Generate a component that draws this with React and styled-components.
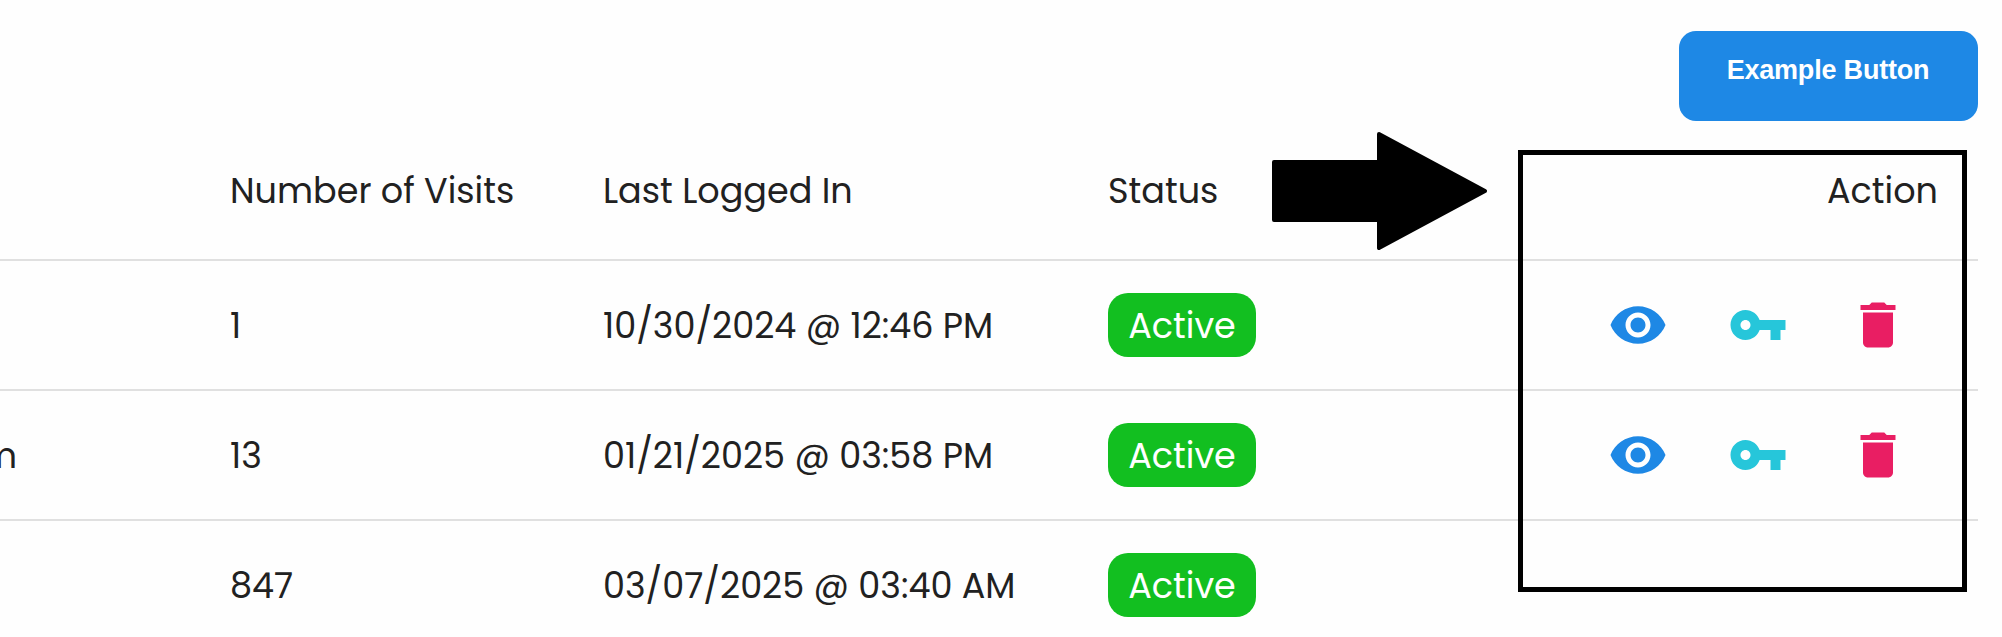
import React from 'react';
import styled, { createGlobalStyle } from 'styled-components';

const GlobalStyle = createGlobalStyle`
  body {
    margin: 0;
    background: #fefefe;
    overflow: hidden;
  }
`;

const Page = styled.main`
  position: relative;
  box-sizing: border-box;
  width: 2002px;
  height: 637px;
  padding-right: 24px;
  overflow: hidden;
  color: #212121;
  font-family: Poppins, Inter, sans-serif;
  font-size: 35px;
`;

const Toolbar = styled.header`
  display: flex;
  justify-content: flex-end;
  padding-top: 31px;
`;

const PrimaryButton = styled.button`
  box-sizing: border-box;
  width: 299px;
  height: 90px;
  padding: 0 1px 11px 0;
  border: 0;
  border-radius: 17px;
  background: #1e88e5;
  color: #fff;
  font: bold 27px 'Liberation Sans', sans-serif;
  letter-spacing: -0.2px;
`;

const Table = styled.section`
  display: flex;
  flex-direction: column;
`;

const Row = styled.div`
  box-sizing: border-box;
  display: grid;
  grid-template-columns: 230px 373px 505px 1fr 1fr;
  align-items: center;
  flex-shrink: 0;
  height: ${(p) => (p.$head ? 140 : 130)}px;
  border-bottom: 2px solid #e0e0e0;
`;

const Cell = styled.div`
  display: flex;
  justify-content: ${(p) => (p.$end ? 'flex-end' : 'flex-start')};
  padding-top: 2px;
  padding-right: ${(p) => (p.$end ? 40 : 0)}px;
  line-height: 48px;
  white-space: nowrap;
`;

const ClippedCell = styled(Cell)`
  margin-left: -19px;
`;

const Badge = styled.span`
  box-sizing: border-box;
  display: flex;
  align-items: center;
  justify-content: center;
  width: 148px;
  height: 64px;
  padding-top: 1px;
  margin-top: -2px;
  border-radius: 20px;
  background: #12bf20;
  color: #fff;
`;

const Actions = styled.div`
  display: flex;
  justify-content: flex-end;
  gap: 60px;
  padding-right: 70px;
`;

const Icon = styled.svg`
  width: 60px;
  height: 60px;
  fill: ${(p) => p.$color};
`;

const HighlightFrame = styled.div`
  position: absolute;
  left: 1518px;
  top: 150px;
  box-sizing: border-box;
  width: 449px;
  height: 442px;
  border: 5px solid #000;
`;

const Arrow = styled.svg`
  position: absolute;
  left: 1272px;
  top: 132px;
  width: 216px;
  height: 118px;
  stroke: #000;
  stroke-width: 4;
  stroke-linejoin: round;
`;

const icons = [
  {
    name: 'View',
    color: '#1e88e5',
    d: 'M12 4.5C7 4.5 2.73 7.61 1 12c1.73 4.39 6 7.5 11 7.5s9.27-3.11 11-7.5c-1.73-4.39-6-7.5-11-7.5zM12 17c-2.76 0-5-2.24-5-5s2.24-5 5-5 5 2.24 5 5-2.24 5-5 5zm0-8c-1.66 0-3 1.34-3 3s1.34 3 3 3 3-1.34 3-3-1.34-3-3-3z',
  },
  {
    name: 'Reset password',
    color: '#26c6da',
    d: 'M12.65 10C11.83 7.67 9.61 6 7 6c-3.31 0-6 2.69-6 6s2.69 6 6 6c2.61 0 4.83-1.67 5.65-4H17v4h4v-4h2v-4H12.65zM7 14c-1.1 0-2-.9-2-2s.9-2 2-2 2 .9 2 2-.9 2-2 2z',
  },
  {
    name: 'Delete',
    color: '#e91e63',
    d: 'M6 19c0 1.1.9 2 2 2h8c1.1 0 2-.9 2-2V7H6v12zM19 4h-3.5l-1-1h-5l-1 1H5v2h14V4z',
  },
];

const rows = [
  { visits: '1', date: '10/30/2024 @ 12:46 PM', actions: true },
  { email: 'm', visits: '13', date: '01/21/2025 @ 03:58 PM', actions: true },
  { visits: '847', date: '03/07/2025 @ 03:40 AM' },
];

export default function App() {
  return (
    <>
      <GlobalStyle />
      <Page>
        <Toolbar>
          <PrimaryButton>Example Button</PrimaryButton>
        </Toolbar>
        <Table>
          <Row $head>
            <Cell />
            <Cell>Number of Visits</Cell>
            <Cell>Last Logged In</Cell>
            <Cell>Status</Cell>
            <Cell $end>Action</Cell>
          </Row>
          {rows.map((row) => (
            <Row key={row.date}>
              <ClippedCell>{row.email}</ClippedCell>
              <Cell>{row.visits}</Cell>
              <Cell>{row.date}</Cell>
              <Cell>
                <Badge>Active</Badge>
              </Cell>
              <Actions>
                {row.actions &&
                  icons.map((icon) => (
                    <Icon key={icon.name} $color={icon.color} viewBox="0 0 24 24" aria-label={icon.name}>
                      <path d={icon.d} />
                    </Icon>
                  ))}
              </Actions>
            </Row>
          ))}
        </Table>
        <Arrow viewBox="0 0 216 118" aria-hidden="true">
          <path d="M2 30H107V2L213 59L107 116V88H2Z" />
        </Arrow>
        <HighlightFrame />
      </Page>
    </>
  );
}
